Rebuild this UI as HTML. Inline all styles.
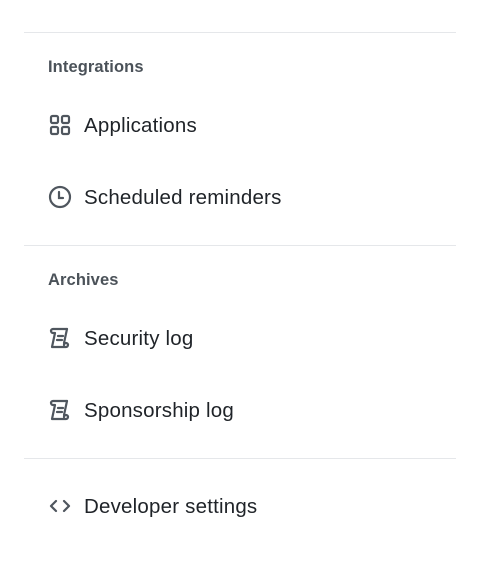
<!DOCTYPE html>
<html><head><style>
body{margin:0;width:480px;height:577px;background:#fff;font-family:"Liberation Sans",sans-serif;position:relative;overflow:hidden}
.hr{position:absolute;left:24px;width:432px;height:1px;background:#e5e7ea}
.h{position:absolute;left:48px;font-size:16.5px;font-weight:bold;color:#4b5259;line-height:20px;letter-spacing:0.1px}
.it{position:absolute;left:48px;height:24px;display:flex;align-items:center;color:#1f2328;font-size:20.5px;letter-spacing:0.2px}
.it span{position:relative;top:1px}
.it svg{width:24px;height:24px;margin-right:12px;flex:none}
</style></head><body>
<div class="hr" style="top:32px"></div>
<div class="h" style="top:57px">Integrations</div>
<div class="it" style="top:113px"><svg viewBox="0 0 24 24" fill="none" stroke="#4f565e" stroke-width="2.2"><rect x="3" y="3" width="7" height="7" rx="1.5"/><rect x="14" y="3" width="7" height="7" rx="1.5"/><rect x="3" y="14" width="7" height="7" rx="1.5"/><rect x="14" y="14" width="7" height="7" rx="1.5"/></svg><span>Applications</span></div>
<div class="it" style="top:185px"><svg viewBox="0 0 24 24" fill="none" stroke="#4f565e" stroke-width="2.2" stroke-linecap="round"><circle cx="12" cy="12" r="10"/><path d="M11 7v6h4"/></svg><span>Scheduled reminders</span></div>
<div class="hr" style="top:245px"></div>
<div class="h" style="top:270px">Archives</div>
<div class="it" style="top:326px"><svg viewBox="0 0 24 24" fill="none" stroke="#4f565e" stroke-width="2.2" stroke-linecap="round" stroke-linejoin="round"><path d="M19 3H5a2 2 0 0 0 0 4h2L4 21h14a2 2 0 0 0 2-2 2 2 0 0 0-4 0"/><path d="M19 3L16 17"/><path d="M10 10h5M9 14h5"/></svg><span>Security log</span></div>
<div class="it" style="top:398px"><svg viewBox="0 0 24 24" fill="none" stroke="#4f565e" stroke-width="2.2" stroke-linecap="round" stroke-linejoin="round"><path d="M19 3H5a2 2 0 0 0 0 4h2L4 21h14a2 2 0 0 0 2-2 2 2 0 0 0-4 0"/><path d="M19 3L16 17"/><path d="M10 10h5M9 14h5"/></svg><span>Sponsorship log</span></div>
<div class="hr" style="top:458px"></div>
<div class="it" style="top:494px"><svg viewBox="0 0 24 24" fill="none" stroke="#4f565e" stroke-width="2.2" stroke-linecap="round" stroke-linejoin="round"><path d="M8 7l-5 5 5 5M16 7l5 5-5 5"/></svg><span>Developer settings</span></div>
</body></html>
